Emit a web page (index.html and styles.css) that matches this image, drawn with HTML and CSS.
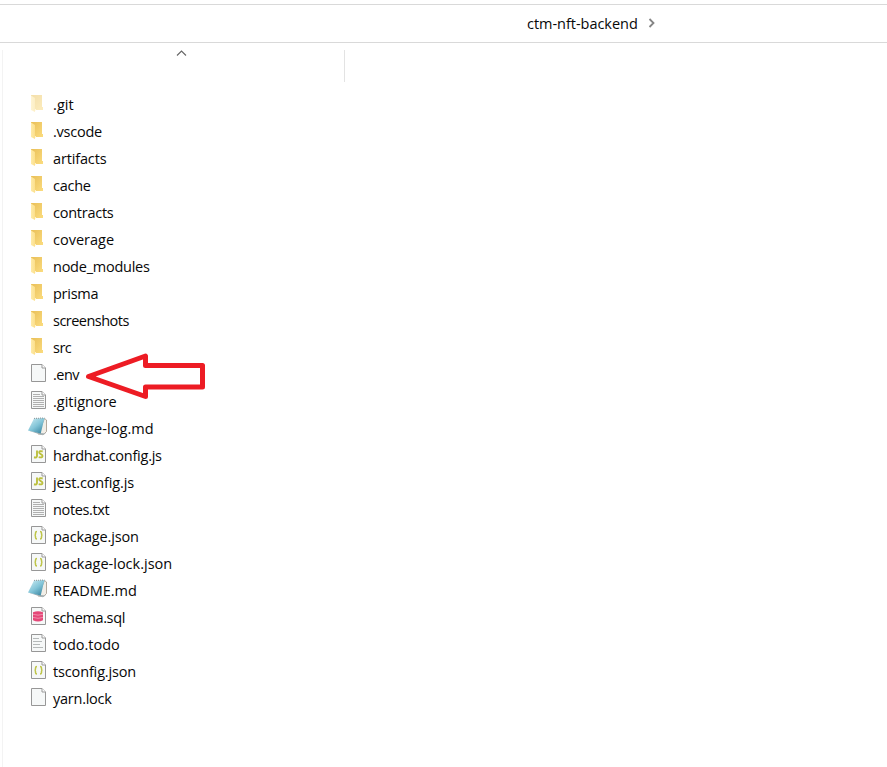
FILE: index.html
```
<!DOCTYPE html>
<html lang="en">
<head>
<meta charset="utf-8">
<title>ctm-nft-backend</title>
<link rel="stylesheet" href="styles.css">
</head>
<body>
<svg class="defs" width="0" height="0" aria-hidden="true">
  <defs>
    <linearGradient id="gold" x1="0" y1="0" x2="1" y2="1"><stop offset="0" stop-color="#e9bf58"/><stop offset="1" stop-color="#fbdc7f"/></linearGradient>
    <linearGradient id="flap" x1="0" y1="0" x2="1" y2="0"><stop offset="0" stop-color="#ffeba8"/><stop offset="1" stop-color="#fbdf8c"/></linearGradient>
    <linearGradient id="blue" x1="0" y1="0" x2=".8" y2="1"><stop offset="0" stop-color="#d3eff4"/><stop offset=".55" stop-color="#83c5d8"/><stop offset="1" stop-color="#3b87a2"/></linearGradient>
    <symbol id="folder" viewBox="0 0 20 27">
      <path d="M3 4H14V16H15V19H3Z" fill="url(#gold)"/>
      <path d="M3 4.5L7 7V21L3 19Z" fill="url(#flap)"/>
      <path d="M7 18H8V19.5H7Z" fill="#fff2c9"/>
    </symbol>
    <symbol id="page" viewBox="0 0 20 27">
      <path d="M3.5 3.5H14L17.5 7V20.500H3.500Z" fill="#f6f8f8" stroke="#979797"/>
      <path d="M14 3.500V7H17.500" fill="#fff" stroke="#999"/>
    </symbol>
    <symbol id="text" viewBox="0 0 20 27">
      <use href="#page"/>
      <path d="M5 6.5H12M5 8.5H16M5 10.5H16M5 12.5H16M5 14.5H16M5 16.5H16M5 18.5H16" stroke="#b0b0b0"/>
    </symbol>
    <symbol id="todo" viewBox="0 0 20 27">
      <use href="#page"/>
      <path d="M5 7.5H11M5 10.5H14M5 13.5H12M5 16.5H15" stroke="#b5b9b9"/>
    </symbol>
    <symbol id="js" viewBox="0 0 20 27">
      <use href="#page"/>
      <path d="M9 8.500V14Q9 16 6 15.300M14.700 9.500Q11.200 8.500 11.200 10.500C11.200 12.300 14.500 12 14.500 14Q14.400 16.100 10.700 15.100" fill="none" stroke="#bcc03e" stroke-width="1.9"/>
    </symbol>
    <symbol id="json" viewBox="0 0 20 27">
      <use href="#page"/>
      <path d="M9 8.500Q7.500 8.500 7.500 10V11Q7.500 12.200 6.500 12.200Q7.500 12.200 7.500 13.500V14.500Q7.500 16 9 16M12 8.500Q13.500 8.500 13.500 10V11Q13.500 12.200 14.500 12.200Q13.500 12.200 13.500 13.500V14.500Q13.500 16 12 16" fill="none" stroke="#bdc448" stroke-width="1.5"/>
    </symbol>
    <symbol id="sql" viewBox="0 0 20 27">
      <use href="#page"/>
      <path d="M5 8.300Q10 6 15 8.300V16.200Q10 18.800 5 16.200Z" fill="#e54878"/>
      <path d="M5 10.300Q10 12 15 10.300M5 13.400Q10 15.200 15 13.400" fill="none" stroke="#f3a0b9" stroke-width=".8"/>
    </symbol>
    <symbol id="note" viewBox="0 0 20 27">
      <path d="M16.500 3.500L18.500 5V16.500L15.500 19.500L10 19Z" fill="#f1eee7" stroke="#a19585" stroke-width=".8"/>
      <path d="M0 15.500L13 18L18 18.500L14.500 20.300Z" fill="#a8b2b5"/>
      <path d="M6 3.500L16.500 3L12.700 18.600L0 15.500Z" fill="url(#blue)"/>
      <path d="M6 3.500L16.500 3" stroke="#929fa2" stroke-width="1.200" stroke-dasharray="1 1"/>
    </symbol>
  </defs>
</svg>
<header class="address">
  <span class="crumb">ctm-nft-backend</span>
  <svg class="chevron" width="8" height="10" viewBox="0 0 8 10"><path d="M1.500 1L5.500 5L1.500 9" fill="none" stroke="#858585" stroke-width="1.800"/></svg>
</header>
<main class="pane">
  <div class="column-head">
    <svg class="sort" width="11" height="7" viewBox="0 0 11 7"><path d="M1 5.500L5.500 1L10 5.500" fill="none" stroke="#666" stroke-width="1.100"/></svg>
  </div>
  <ul class="files">
    <li class="hidden-item wide"><svg><use href="#folder"/></svg><span>.git</span></li>
    <li><svg><use href="#folder"/></svg><span>.vscode</span></li>
    <li class="roomy"><svg><use href="#folder"/></svg><span>artifacts</span></li>
    <li><svg><use href="#folder"/></svg><span>cache</span></li>
    <li><svg><use href="#folder"/></svg><span>contracts</span></li>
    <li class="loose"><svg><use href="#folder"/></svg><span>coverage</span></li>
    <li><svg><use href="#folder"/></svg><span>node_modules</span></li>
    <li><svg><use href="#folder"/></svg><span>prisma</span></li>
    <li class="tight"><svg><use href="#folder"/></svg><span>screenshots</span></li>
    <li class="tight"><svg><use href="#folder"/></svg><span>src</span></li>
    <li class="marked tight"><svg><use href="#page"/></svg><span>.env</span>
      <svg class="arrow" viewBox="0 0 120 48"><path d="M2.500 24.500L59.500 4V13.500H116.500V35H59.500V44.500Z" fill="none" stroke="#ed1c24" stroke-width="5" stroke-linejoin="round"/></svg></li>
    <li class="loose"><svg><use href="#text"/></svg><span>.gitignore</span></li>
    <li class="wide"><svg><use href="#note"/></svg><span>change-log.md</span></li>
    <li><svg><use href="#js"/></svg><span>hardhat.config.js</span></li>
    <li class="roomy"><svg><use href="#js"/></svg><span>jest.config.js</span></li>
    <li class="snug"><svg><use href="#text"/></svg><span>notes.txt</span></li>
    <li class="roomy"><svg><use href="#json"/></svg><span>package.json</span></li>
    <li class="loose"><svg><use href="#json"/></svg><span>package-lock.json</span></li>
    <li class="loose"><svg><use href="#note"/></svg><span>README.md</span></li>
    <li class="snug"><svg><use href="#sql"/></svg><span>schema.sql</span></li>
    <li class="loose"><svg><use href="#todo"/></svg><span>todo.todo</span></li>
    <li class="roomy"><svg><use href="#json"/></svg><span>tsconfig.json</span></li>
    <li><svg><use href="#page"/></svg><span>yarn.lock</span></li>
  </ul>
</main>
</body>
</html>
```
FILE: styles.css
```
* { box-sizing: border-box; }
body {
  margin: 0;
  height: 767px;
  overflow: hidden;
  display: flex;
  flex-direction: column;
  background: #fff;
  color: #080808;
  font: 14.5px/20px "Open Sans", "Noto Sans", sans-serif;
  letter-spacing: -0.25px;
}
.defs { position: absolute; }
.address {
  height: 39px;
  flex: none;
  margin-top: 4px;
  padding-left: 527px;
  display: flex;
  align-items: center;
  border: solid #d9d9d9;
  border-width: 1px 0;
}
.crumb { width: 121px; white-space: nowrap; letter-spacing: -0.03px; }
.chevron { margin-bottom: 2px; }
.pane {
  flex: 1;
  margin: 7px 0 0 2px;
  border-left: 1px solid #f3f3f3;
}
.column-head {
  width: 342px;
  height: 32px;
  border-right: 1px solid #e3e3e3;
  display: flex;
  justify-content: center;
}
.sort { margin-left: 15px; }
.files {
  list-style: none;
  margin: 9px 0 0;
  padding: 0 0 0 25px;
}
.files li {
  height: 27px;
  display: flex;
  align-items: center;
  gap: 5px;
}
.files svg { width: 20px; height: 27px; flex: none; }
.files span { white-space: nowrap; }
.wide { letter-spacing: 0.07px; }
.loose { letter-spacing: 0; }
.roomy { letter-spacing: -0.15px; }
.snug { letter-spacing: -0.37px; }
.tight { letter-spacing: -0.52px; }
.hidden-item svg { opacity: .5; }
.marked { position: relative; }
.files .arrow {
  position: absolute;
  left: 58px;
  top: -9px;
  width: 120px;
  height: 48px;
}
```
